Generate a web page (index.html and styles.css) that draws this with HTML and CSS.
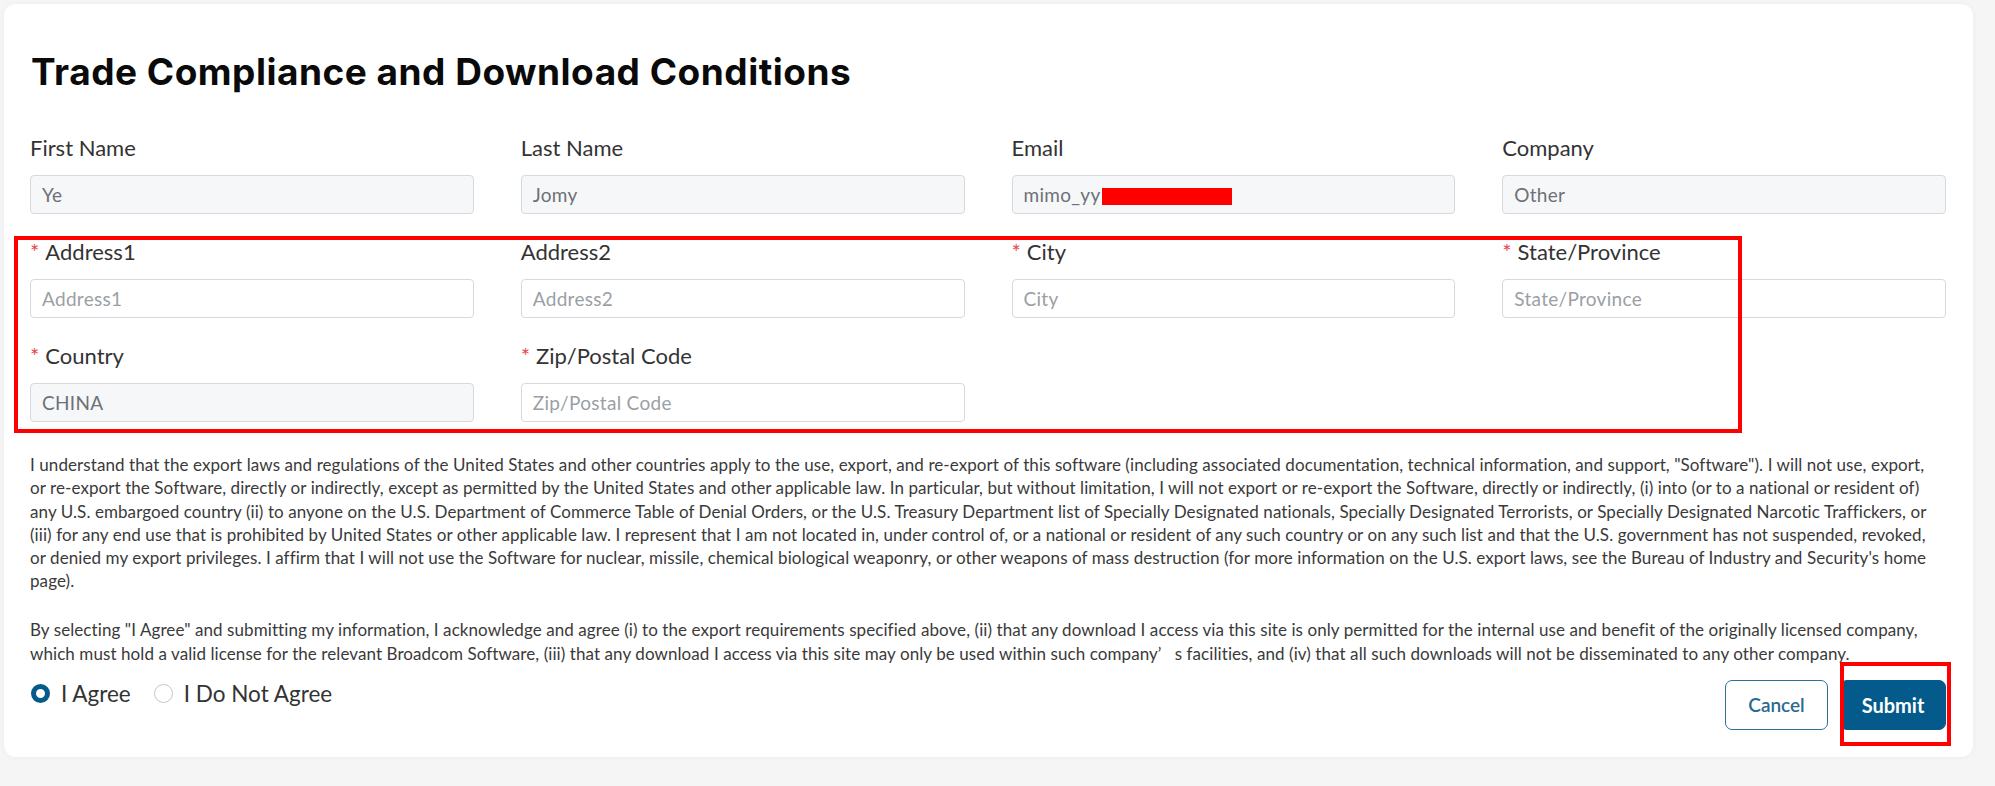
FILE: index.html
```html
<!DOCTYPE html>
<html lang="en">
<head>
<meta charset="utf-8">
<title>Trade Compliance and Download Conditions</title>
<link rel="stylesheet" href="styles.css">
</head>
<body>
<div class="page">
  <section class="card">
    <h1 class="title">Trade Compliance and Download Conditions</h1>

    <div class="grid">
      <div class="field">
        <label class="label">First Name</label>
        <input class="input" type="text" value="Ye" disabled>
      </div>
      <div class="field">
        <label class="label">Last Name</label>
        <input class="input" type="text" value="Jomy" disabled>
      </div>
      <div class="field">
        <label class="label">Email</label>
        <div class="input-wrap">
          <input class="input" type="text" value="mimo_yy" disabled>
          <span class="redact"></span>
        </div>
      </div>
      <div class="field">
        <label class="label">Company</label>
        <input class="input" type="text" value="Other" disabled>
      </div>

      <div class="field">
        <label class="label"><span class="req">*</span>Address1</label>
        <input class="input" type="text" placeholder="Address1">
      </div>
      <div class="field">
        <label class="label">Address2</label>
        <input class="input" type="text" placeholder="Address2">
      </div>
      <div class="field">
        <label class="label"><span class="req">*</span>City</label>
        <input class="input" type="text" placeholder="City">
      </div>
      <div class="field">
        <label class="label"><span class="req">*</span>State/Province</label>
        <input class="input" type="text" placeholder="State/Province">
      </div>

      <div class="field">
        <label class="label"><span class="req">*</span>Country</label>
        <input class="input" type="text" value="CHINA" disabled>
      </div>
      <div class="field">
        <label class="label"><span class="req">*</span>Zip/Postal Code</label>
        <input class="input" type="text" placeholder="Zip/Postal Code">
      </div>
    </div>

    <p class="terms">I understand that the export laws and regulations of the United States and other countries apply to the use, export, and re-export of this software (including associated documentation, technical information, and support, "Software"). I will not use, export,<br>or re-export the Software, directly or indirectly, except as permitted by the United States and other applicable law. In particular, but without limitation, I will not export or re-export the Software, directly or indirectly, (i) into (or to a national or resident of)<br>any U.S. embargoed country (ii) to anyone on the U.S. Department of Commerce Table of Denial Orders, or the U.S. Treasury Department list of Specially Designated nationals, Specially Designated Terrorists, or Specially Designated Narcotic Traffickers, or<br>(iii) for any end use that is prohibited by United States or other applicable law. I represent that I am not located in, under control of, or a national or resident of any such country or on any such list and that the U.S. government has not suspended, revoked,<br>or denied my export privileges. I affirm that I will not use the Software for nuclear, missile, chemical biological weaponry, or other weapons of mass destruction (for more information on the U.S. export laws, see the Bureau of Industry and Security's home<br>page).</p>

    <p class="terms terms-agree">By selecting "I Agree" and submitting my information, I acknowledge and agree (i) to the export requirements specified above, (ii) that any download I access via this site is only permitted for the internal use and benefit of the originally licensed company,<br>which must hold a valid license for the relevant Broadcom Software, (iii) that any download I access via this site may only be used within such company’&nbsp;&nbsp;&nbsp;s facilities, and (iv) that all such downloads will not be disseminated to any other company.</p>

    <div class="actions">
      <div class="radios">
        <label class="option"><span class="radio checked"></span><span class="option-text">I Agree</span></label>
        <label class="option"><span class="radio"></span><span class="option-text">I Do Not Agree</span></label>
      </div>
      <div class="buttons">
        <button class="btn btn-outline" type="button">Cancel</button>
        <button class="btn btn-primary" type="button">Submit</button>
      </div>
    </div>

    <div class="mark mark-address"></div>
    <div class="mark mark-submit"></div>
  </section>
</div>
</body>
</html>
```

FILE: styles.css
```css
* {
  box-sizing: border-box;
}

html, body {
  margin: 0;
  padding: 0;
  background: #f5f5f6;
  overflow: hidden;
}

body {
  font-family: "Lato", "Open Sans", sans-serif;
  color: #333;
}

.page {
  width: 1995px;
  height: 786px;
  padding: 4px 0 0 4px;
}

.card {
  position: relative;
  width: 1969px;
  background: #fff;
  border-radius: 12px;
  box-shadow: 0 0 6px rgba(0, 0, 0, 0.04);
  padding: 46px 27px 27px 26px;
}

.title {
  margin: 0;
  font-family: "Inter", "Lato", sans-serif;
  font-weight: 700;
  font-size: 37px;
  line-height: 44px;
  color: #0a0a0a;
  letter-spacing: 0.5px;
  padding-left: 1px;
}

.grid {
  margin-top: 39px;
  display: grid;
  grid-template-columns: repeat(4, 1fr);
  column-gap: 47px;
  row-gap: 23px;
}

.field {
  display: flex;
  flex-direction: column;
}

.label {
  display: block;
  font-size: 22px;
  line-height: 30px;
  color: #333;
  margin-bottom: 12px;
}

.req {
  color: #e5484d;
  font-size: 22px;
  margin-right: 6px;
}

.input-wrap {
  position: relative;
}

.input {
  display: block;
  width: 100%;
  height: 39px;
  border: 1px solid #d6d9de;
  border-radius: 4px;
  padding: 0 11px;
  font-family: "Lato", sans-serif;
  font-size: 19px;
  letter-spacing: 0.3px;
  color: #6d7177;
  background: #fff;
  outline: none;
}

.input:disabled {
  background: #f6f7f9;
  color: #6d7177;
  -webkit-text-fill-color: #6d7177;
  opacity: 1;
}

.input::placeholder {
  color: #9a9fa5;
  opacity: 1;
}

.redact {
  position: absolute;
  left: 90px;
  top: 13px;
  width: 130px;
  height: 17px;
  background: #ff0000;
}

.terms {
  margin: 31px 0 0;
  font-size: 17px;
  line-height: 23.3px;
  letter-spacing: 0.08px;
  white-space: nowrap;
  color: #3a3a3a;
}

.terms-agree {
  margin-top: 25px;
  line-height: 24px;
}

.actions {
  margin-top: 13px;
  display: flex;
  justify-content: space-between;
  align-items: flex-start;
}

.radios {
  display: flex;
  align-items: center;
  gap: 23px;
}

.option {
  display: flex;
  align-items: center;
  gap: 11px;
  font-size: 22.5px;
  line-height: 30px;
  color: #333;
}

.radios .option:first-child {
  padding-left: 1px;
}

.radio {
  width: 19px;
  height: 19px;
  border-radius: 50%;
  border: 1px solid #c3c6ca;
  background: #fff;
}

.radio.checked {
  border: 5.5px solid #055a8c;
}

.buttons {
  display: flex;
  gap: 12px;
  margin-top: 1px;
}

.btn {
  height: 50px;
  border-radius: 7px;
  font-family: "Lato", sans-serif;
  font-size: 19px;
  cursor: pointer;
}

.btn-outline {
  width: 103px;
  background: #fff;
  border: 1.5px solid #2f7099;
  color: #2b6a90;
  font-weight: 600;
}

.btn-primary {
  width: 106px;
  background: #045a8a;
  border: 1px solid #045a8a;
  color: #fff;
  font-weight: 700;
  font-size: 20px;
}

.mark {
  position: absolute;
  border: 4px solid #ff0000;
  pointer-events: none;
}

.mark-address {
  left: 10px;
  top: 232px;
  width: 1728px;
  height: 197px;
}

.mark-submit {
  left: 1836px;
  top: 658px;
  width: 111px;
  height: 84px;
}
```
